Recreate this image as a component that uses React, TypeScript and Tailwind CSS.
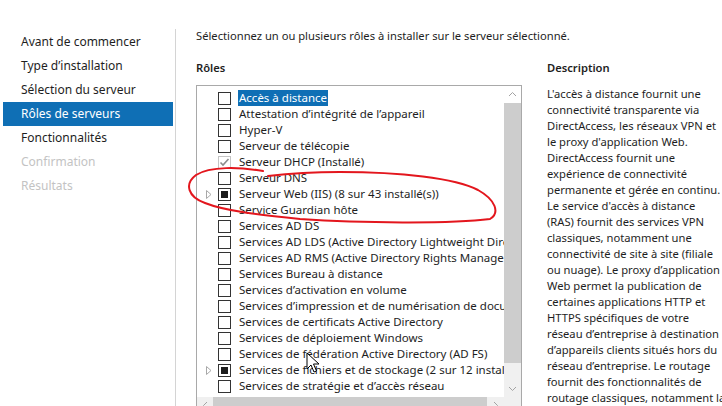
import React from "react";

type Role = {
  label: string;
  state?: "checked" | "partial";
  expand?: boolean;
  selected?: boolean;
};

const steps = [
  { label: "Avant de commencer" },
  { label: "Type d’installation" },
  { label: "Sélection du serveur" },
  { label: "Rôles de serveurs", active: true },
  { label: "Fonctionnalités" },
  { label: "Confirmation", disabled: true },
  { label: "Résultats", disabled: true },
];

const roles: Role[] = [
  { label: "Accès à distance", selected: true },
  { label: "Attestation d’intégrité de l’appareil" },
  { label: "Hyper-V" },
  { label: "Serveur de télécopie" },
  { label: "Serveur DHCP (Installé)", state: "checked" },
  { label: "Serveur DNS" },
  { label: "Serveur Web (IIS) (8 sur 43 installé(s))", state: "partial", expand: true },
  { label: "Service Guardian hôte" },
  { label: "Services AD DS" },
  { label: "Services AD LDS (Active Directory Lightweight Directory Services)" },
  { label: "Services AD RMS (Active Directory Rights Management Services)" },
  { label: "Services Bureau à distance" },
  { label: "Services d’activation en volume" },
  { label: "Services d’impression et de numérisation de document" },
  { label: "Services de certificats Active Directory" },
  { label: "Services de déploiement Windows" },
  { label: "Services de fédération Active Directory (AD FS)" },
  { label: "Services de fichiers et de stockage (2 sur 12 installé(s))", state: "partial", expand: true },
  { label: "Services de stratégie et d’accès réseau" },
];

const description = [
  "L'accès à distance fournit une",
  "connectivité transparente via",
  "DirectAccess, les réseaux VPN et",
  "le proxy d'application Web.",
  "DirectAccess fournit une",
  "expérience de connectivité",
  "permanente et gérée en continu.",
  "Le service d'accès à distance",
  "(RAS) fournit des services VPN",
  "classiques, notamment une",
  "connectivité de site à site (filiale",
  "ou nuage). Le proxy d’application",
  "Web permet la publication de",
  "certaines applications HTTP et",
  "HTTPS spécifiques de votre",
  "réseau d’entreprise à destination",
  "d’appareils clients situés hors du",
  "réseau d’entreprise. Le routage",
  "fournit des fonctionnalités de",
  "routage classiques, notamment la",
];

function Checkbox({ state }: { state?: Role["state"] }) {
  if (state === "checked") {
    return (
      <div className="w-[13px] h-[13px] shrink-0 border border-[#c4c4c4] bg-white flex items-center justify-center">
        <svg width="11" height="11" viewBox="0 0 11 11">
          <path d="M1.5 5.5 L4 8 L9.5 2" fill="none" stroke="#8c8c8c" strokeWidth="1.6" />
        </svg>
      </div>
    );
  }
  return (
    <div className="w-[13px] h-[13px] shrink-0 border border-[#333333] bg-white flex items-center justify-center">
      {state === "partial" && <div className="w-[7px] h-[7px] bg-[#1c1c1c]" />}
    </div>
  );
}

function Chevron({ dir }: { dir: "up" | "down" | "left" | "right" }) {
  const d = {
    up: "M1 6 L4.5 2.5 L8 6",
    down: "M1 3 L4.5 6.5 L8 3",
    left: "M6 1 L2.5 4.5 L6 8",
    right: "M3 1 L6.5 4.5 L3 8",
  }[dir];
  return (
    <svg width="9" height="9" viewBox="0 0 9 9">
      <path d={d} fill="none" stroke="#a3a3a3" strokeWidth="1" />
    </svg>
  );
}

export default function App() {
  return (
    <div className="relative w-[722px] h-[406px] bg-white overflow-hidden flex font-['Noto_Sans','Open_Sans',sans-serif] text-[11.2px] text-[#1e1e1e]">
      {/* steps nav */}
      <nav className="w-[176px] shrink-0 mt-[29px] pt-[1px] border-r border-[#d4d4d4] text-[12px]">
        {steps.map((s) => (
          <div
            key={s.label}
            className={
              s.active
                ? "ml-[3px] mr-[2px] h-[24px] pl-[18px] flex items-center bg-[#0f6fb5] text-white"
                : s.disabled
                ? "ml-[3px] mr-[2px] h-[24px] pl-[18px] flex items-center text-[#c3c3c3]"
                : "ml-[3px] mr-[2px] h-[24px] pl-[18px] flex items-center"
            }
          >
            {s.label}
          </div>
        ))}
      </nav>

      {/* content */}
      <main className="flex-1 pl-[20px] pt-[28px]">
        <p className="h-[16px] leading-[16px] whitespace-nowrap">
          Sélectionnez un ou plusieurs rôles à installer sur le serveur sélectionné.
        </p>

        <div className="flex mt-[16px]">
          {/* roles list */}
          <section className="w-[326px] shrink-0">
            <h2 className="h-[16px] leading-[16px] font-semibold mb-[9px]">Rôles</h2>
            <div className="w-[326px] h-[330px] border border-[#a9a9a9] flex flex-col">
              <div className="flex flex-1 min-h-0">
                <div className="flex-1 min-w-0 overflow-hidden pt-[4px] text-[11.5px]">
                  {roles.map((r) => (
                    <div key={r.label} className="h-[16px] flex items-center whitespace-nowrap">
                      <div className="w-[21px] shrink-0 flex justify-center pl-[2px]">
                        {r.expand && (
                          <svg width="6" height="9" viewBox="0 0 6 9">
                            <path d="M0.5 0.5 L5 4.5 L0.5 8.5 Z" fill="none" stroke="#a8a8a8" strokeWidth="1" />
                          </svg>
                        )}
                      </div>
                      <Checkbox state={r.state} />
                      <span
                        className={
                          r.selected
                            ? "ml-[7px] px-[1px] leading-[16px] bg-[#0f6fb5] text-white"
                            : "ml-[7px] px-[1px] leading-[16px]"
                        }
                      >
                        {r.label}
                      </span>
                    </div>
                  ))}
                </div>
                {/* vertical scrollbar */}
                <div className="w-[17px] shrink-0 flex flex-col bg-[#f0f0f0]">
                  <div className="h-[17px] flex items-center justify-center bg-white">
                    <Chevron dir="up" />
                  </div>
                  <div className="h-[260px] bg-[#cdcdcd]" />
                  <div className="flex-1" />
                  <div className="h-[17px] flex items-center justify-center">
                    <Chevron dir="down" />
                  </div>
                </div>
              </div>
              {/* horizontal scrollbar */}
              <div className="h-[17px] shrink-0 flex bg-[#f0f0f0]">
                <div className="w-[16px] flex items-center justify-center">
                  <Chevron dir="left" />
                </div>
                <div className="flex-1 bg-[#cdcdcd]" />
                <div className="w-[17px] flex items-center justify-center">
                  <Chevron dir="right" />
                </div>
                <div className="w-[17px] bg-[#f0f0f0]" />
              </div>
            </div>
          </section>

          {/* description */}
          <section className="ml-[25px] flex-1">
            <h2 className="h-[16px] leading-[16px] font-semibold">Description</h2>
            <div className="mt-[10px]">
              {description.map((line) => (
                <p key={line} className="h-[16px] leading-[16px] whitespace-nowrap">
                  {line}
                </p>
              ))}
            </div>
          </section>
        </div>
      </main>

      {/* red annotation */}
      <svg className="absolute left-0 top-0 pointer-events-none" width="722" height="406" viewBox="0 0 722 406">
        <path
          d="M263 171 C 240 167, 210 166, 196 175 C 184 184, 188 197, 205 203 C 225 211, 260 215, 300 219 C 360 223, 450 224, 490 219 C 500 213, 496 200, 478 190 C 455 178, 400 172, 340 172 C 310 172, 285 174, 268 176"
          fill="none"
          stroke="#e3161d"
          strokeWidth="2"
          strokeLinecap="round"
        />
      </svg>

      {/* mouse cursor */}
      <svg className="absolute left-[306px] top-[352px] pointer-events-none" width="14" height="22" viewBox="0 0 14 22">
        <path d="M1 1 L1 17 L5 13 L8 20 L10.5 19 L7.5 12 L13 12 Z" fill="white" stroke="#000" strokeWidth="1" strokeLinejoin="round" />
      </svg>
    </div>
  );
}
